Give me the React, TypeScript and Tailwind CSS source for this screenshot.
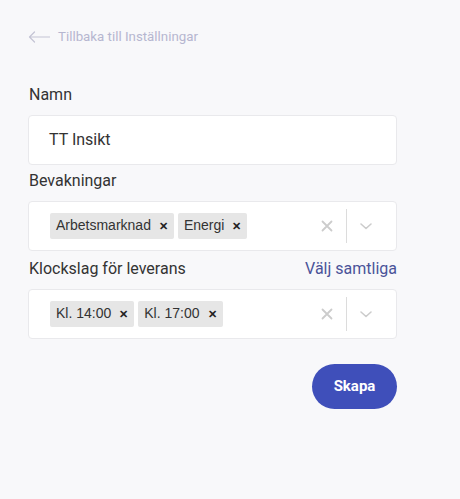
import React from "react";

function SelectBox({ chips }: { chips: string[] }) {
  return (
    <div className="flex h-[50px] items-center rounded-[4px] border border-[#e9e9ec] bg-white">
      <div className="flex flex-1 items-center gap-[4px] pl-[21px]">
        {chips.map((c) => (
          <div
            key={c}
            className="flex h-[26px] items-center rounded-[2px] bg-[#e6e6e6] pl-[6px] pr-[6px] font-['Liberation_Sans',Arial,sans-serif] text-[14px] text-[#333]"
          >
            <span>{c}</span>
            <span className="ml-[8px] text-[11px] font-bold text-[#222]">✕</span>
          </div>
        ))}
      </div>
      <div className="flex h-full items-center">
        <svg width="20" height="20" viewBox="0 0 20 20" className="mr-[9px]">
          <path d="M5.5 5.5 L14.5 14.5 M14.5 5.5 L5.5 14.5" stroke="#cccccc" strokeWidth="1.8" strokeLinecap="round" />
        </svg>
        <div className="h-[34px] w-px bg-[#dcdcdc]" />
        <svg width="20" height="20" viewBox="0 0 20 20" className="ml-[9px] mr-[20px]">
          <path d="M5 8 L10 12.5 L15 8" stroke="#cccccc" strokeWidth="1.6" fill="none" strokeLinecap="round" strokeLinejoin="round" />
        </svg>
      </div>
    </div>
  );
}

export default function App() {
  return (
    <div className="min-h-[499px] w-[460px] bg-[#f8f8fa] font-['Roboto',sans-serif]">
      <div className="pl-[28px] pr-[63px] pt-[27px]">
        <div className="flex items-center gap-[8px] text-[13.3px] text-[#b6b6d0]">
          <svg width="22" height="12" viewBox="0 0 22 12">
            <path d="M1.5 6 H21.5 M6.5 1 L1.5 6 L6.5 11" stroke="#c4c4d4" strokeWidth="1.2" fill="none" strokeLinecap="round" strokeLinejoin="round" />
          </svg>
          <span>Tillbaka till Inställningar</span>
        </div>

        <div className="mt-[36px] text-[16px] text-[#333] pl-[1px]">Namn</div>
        <div className="mt-[8px] flex h-[50px] items-center rounded-[4px] border border-[#e9e9ec] bg-white pl-[20px] text-[16px] text-[#333]">
          TT Insikt
        </div>

        <div className="mt-[4px] text-[16px] text-[#333] pl-[1px]">Bevakningar</div>
        <div className="mt-[8px]">
          <SelectBox chips={["Arbetsmarknad", "Energi"]} />
        </div>

        <div className="mt-[6px] flex items-center justify-between pl-[1px]">
          <span className="text-[16px] text-[#333]">Klockslag för leverans</span>
          <span className="text-[16px] text-[#4a5399]">Välj samtliga</span>
        </div>
        <div className="mt-[8px]">
          <SelectBox chips={["Kl. 14:00", "Kl. 17:00"]} />
        </div>

        <div className="mt-[25px] flex justify-end">
          <button className="h-[45px] w-[85px] rounded-full bg-[#3f4fba] text-[15px] font-bold text-white">
            Skapa
          </button>
        </div>
      </div>
    </div>
  );
}
